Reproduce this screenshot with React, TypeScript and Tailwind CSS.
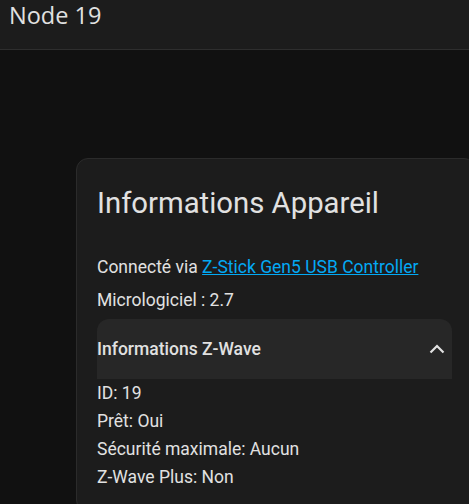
import React from "react";

export default function App() {
  return (
    <div className="w-[469px] h-[504px] overflow-hidden bg-[#111111] text-[#e1e1e1]" style={{ fontFamily: "Roboto, 'Noto Sans', sans-serif" }}>
      <header className="h-[50px] bg-[#1c1c1c] border-b border-[#2e2e2e] pl-[9px] pt-0">
        <h1 className="text-[23.5px] leading-[30px] text-[#e1e1e1]" style={{ fontFamily: "'Open Sans', 'Noto Sans', sans-serif" }}>Node 19</h1>
      </header>
      <main className="pl-[76px] pt-[108px]">
        <section className="w-[400px] rounded-[12px] border border-[#2b2b2b] bg-[#1c1c1c] pl-[20px] pr-[23px] pt-[28px] pb-[20px]">
          <h2 className="text-[29.3px] leading-[32px] font-normal">Informations Appareil</h2>
          <p className="mt-[36px] text-[17.5px] leading-[24px]">
            Connecté via{" "}
            <a href="#" className="text-[#03a9f4] underline">Z-Stick Gen5 USB Controller</a>
          </p>
          <p className="mt-[9px] text-[17.5px] leading-[24px]">Micrologiciel : 2.7</p>
          <div className="mt-[7px]">
            <div className="h-[60px] rounded-t-[12px] bg-[#272727] flex items-center justify-between pr-[7px]">
              <span className="text-[17.5px] font-medium">Informations Z-Wave</span>
              <svg width="16" height="10" viewBox="0 0 16 10" className="text-[#e1e1e1]">
                <path d="M1.5 8.5 L8 2 L14.5 8.5" fill="none" stroke="currentColor" strokeWidth="2.2" />
              </svg>
            </div>
            <div className="text-[17.5px] leading-[28px]">
              <div>ID: 19</div>
              <div>Prêt: Oui</div>
              <div>Sécurité maximale: Aucun</div>
              <div>Z-Wave Plus: Non</div>
            </div>
          </div>
        </section>
      </main>
    </div>
  );
}
